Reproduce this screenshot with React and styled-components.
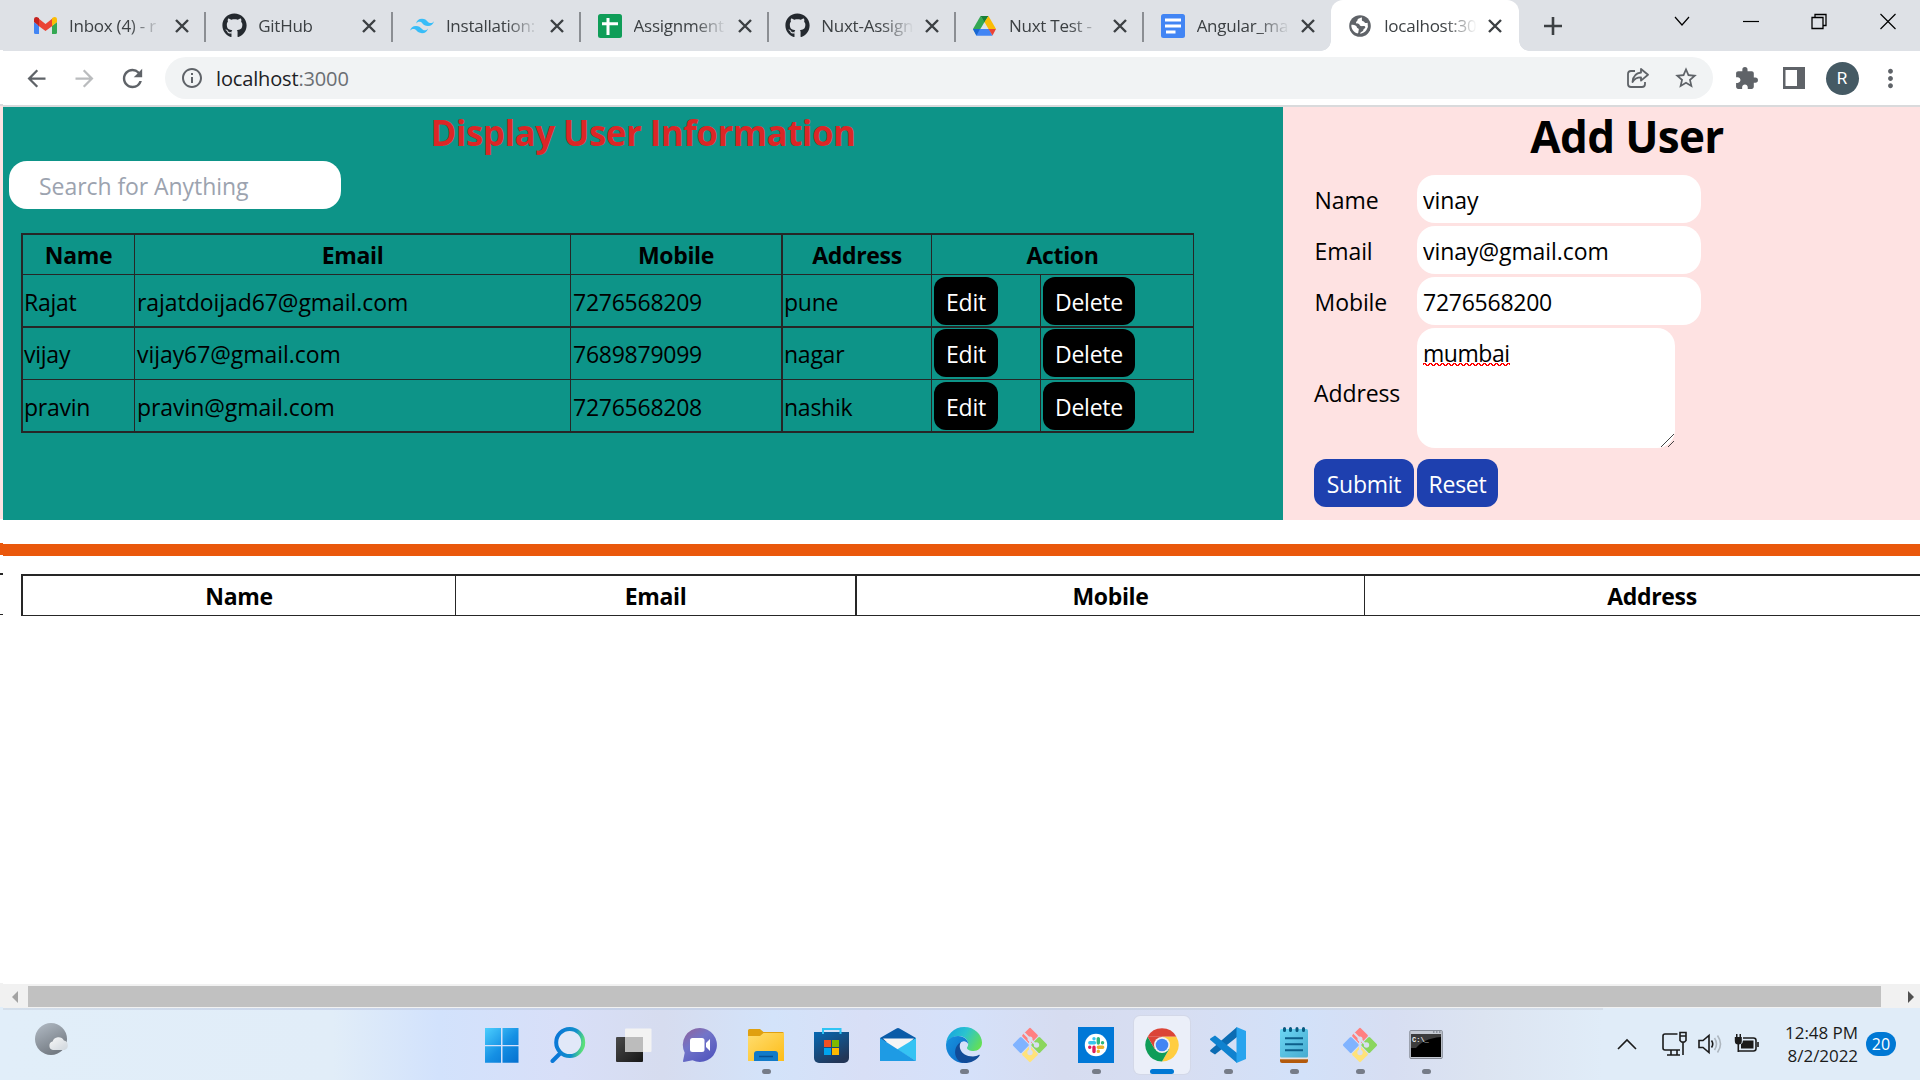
import React from "react";
import styled, { createGlobalStyle, css } from "styled-components";
import { FaGithub } from "react-icons/fa";
import { SiTailwindcss } from "react-icons/si";
import { MdArrowBack, MdArrowForward, MdRefresh, MdInfoOutline, MdStarBorder, MdExtension, MdMoreVert } from "react-icons/md";

const line = "#262626";

const GlobalStyle = createGlobalStyle`
  * { box-sizing: border-box; }
  body {
    margin: 0;
    overflow: hidden;
    background: #fff;
    font-family: "Open Sans", "Noto Sans", sans-serif;
    color: #000;
  }
  svg { display: block; flex: none; }
`;

const Screen = styled.div`
  display: flex;
  width: 1920px;
  height: 1080px;
  overflow: hidden;
`;

const Edge = styled.div`
  width: 3px;
  flex: none;
  display: flex;
  flex-direction: column;
`;

const EdgeBand = styled.div`
  height: ${(p) => p.$h}px;
  background: ${(p) => p.$bg};
`;

const Main = styled.div`
  flex: 1;
  min-width: 0;
  display: flex;
  flex-direction: column;
`;

/* ---------- browser chrome ---------- */

const TabBar = styled.div`
  height: 51px;
  flex: none;
  display: flex;
  align-items: stretch;
  background: #dee1e6;
  padding-left: 14px;
`;

const Tab = styled.div`
  width: 187.7px;
  flex: none;
  display: flex;
  align-items: center;
  padding-left: ${(p) => (p.$first ? 16 : 17.5)}px;
  position: relative;
  ${(p) =>
    p.$divider &&
    css`
      &::after {
        content: "";
        position: absolute;
        right: -1px;
        top: 12px;
        width: 2px;
        height: 30px;
        background: #8b8e93;
      }
    `}
  ${(p) =>
    p.$active &&
    css`
      background: #fff;
      border-radius: 12px 12px 0 0;
      &::before,
      &::after {
        content: "";
        position: absolute;
        bottom: 0;
        width: 10px;
        height: 10px;
      }
      &::before {
        left: -10px;
        background: radial-gradient(circle at 0 0, transparent 9.5px, #fff 10px);
      }
      &::after {
        right: -10px;
        background: radial-gradient(circle at 100% 0, transparent 9.5px, #fff 10px);
      }
    `}
`;

const TabIcon = styled.span`
  width: 24px;
  display: flex;
  justify-content: center;
`;

const TabTitle = styled.span`
  width: 94px;
  margin-left: 12px;
  overflow: hidden;
  white-space: nowrap;
  font-size: 17px;
  letter-spacing: -0.25px;
  line-height: 24px;
  color: #3c4043;
  mask-image: linear-gradient(90deg, #000 60px, transparent 93px);
`;

const TabClose = styled.span`
  margin-left: ${(p) => (p.$first ? 12 : 10)}px;
  display: flex;
`;

const NewTab = styled.div`
  display: flex;
  align-items: center;
  margin-left: 25px;
  flex: 1;
`;

const WindowControls = styled.div`
  display: flex;
  align-items: flex-start;
  gap: 52.7px;
  padding: 11px 24px 0 0;
`;

const Toolbar = styled.div`
  height: 56px;
  flex: none;
  display: flex;
  align-items: center;
  border-bottom: 2px solid #d9dadc;
  background: #fff;
  padding: 0 6px 0 9px;
`;

const ToolBtn = styled.span`
  width: 48px;
  display: flex;
  justify-content: center;
  color: ${(p) => p.$color || "#5f6368"};
`;

const Omnibox = styled.div`
  flex: 1;
  height: 42px;
  margin-left: 9px;
  margin-right: 9px;
  border-radius: 21px;
  background: #f1f3f4;
  display: flex;
  align-items: center;
  padding-left: 3px;
  padding-right: 3px;
`;

const Url = styled.span`
  flex: 1;
  font-size: 20px;
  letter-spacing: -0.15px;
  color: #202124;
  span { color: #6a6e73; }
`;

const Avatar = styled.span`
  width: 33px;
  height: 33px;
  border-radius: 50%;
  background: #455a64;
  color: #fff;
  font: 17px Roboto, sans-serif;
  display: flex;
  align-items: center;
  justify-content: center;
`;

/* ---------- page ---------- */

const Page = styled.div`
  flex: 1;
  min-height: 0;
  display: flex;
  flex-direction: column;
  overflow: hidden;
`;

const Panels = styled.div`
  display: flex;
  height: 413px;
  flex: none;
`;

const UsersPanel = styled.section`
  width: 1280px;
  flex: none;
  background: #0d9488;
`;

const UsersTitle = styled.h2`
  margin: 0;
  height: 54px;
  line-height: 52px;
  text-align: center;
  font-size: 35px;
  font-weight: 700;
  letter-spacing: -0.55px;
  color: #dc2626;
`;

const fieldText = css`
  font-family: "Open Sans", "Noto Sans", sans-serif;
  font-size: 23px;
  letter-spacing: ${(p) => (p.$loose ? -0.06 : -0.25)}px;
`;

const Search = styled.input`
  ${fieldText}
  display: block;
  margin-left: 6px;
  width: 332px;
  height: 48px;
  border: 0;
  border-radius: 18px;
  padding: 2px 30px 0;
  background: #fff;
  &::placeholder { color: #9ca3af; opacity: 1; }
`;

const Grid = styled.div`
  display: grid;
  flex: none;
  grid-template-columns: ${(p) => p.$cols};
  grid-template-rows: ${(p) => p.$rows};
  border: solid ${line};
  border-width: 2px 0 0 2px;
  margin: ${(p) => p.$margin};
  width: max-content;
`;

const Cell = styled.div`
  ${fieldText}
  display: flex;
  align-items: center;
  white-space: nowrap;
  padding: ${(p) => (p.$bottom === 1 ? 0 : 2)}px 0 0 ${(p) => (p.$snug ? 1 : 2)}px;
  border: 0 solid ${line};
  border-right-width: ${(p) => p.$right || 1}px;
  border-bottom-width: ${(p) => p.$bottom || 1}px;
  ${(p) =>
    p.$head &&
    css`
      justify-content: center;
      font-weight: 700;
      letter-spacing: -0.35px;
      padding: 0;
      grid-column: span ${p.$span || 1};
    `}
  ${(p) => p.$action && css`padding: ${p.$action}px 0 0 2px; align-items: flex-start;`}
`;

const Button = styled.button`
  ${fieldText}
  height: 48px;
  width: ${(p) => p.$w}px;
  padding: 2px 0 0;
  border: 0;
  border-radius: 12px;
  color: #fff;
  background: ${(p) => (p.$blue ? "#1e40af" : "#000")};
`;

const FormPanel = styled.section`
  width: 688px;
  flex: none;
  background: #fee2e2;
`;

const FormTitle = styled.h1`
  margin: 0;
  height: 68px;
  line-height: 59px;
  text-align: center;
  font-size: 44px;
  font-weight: 700;
  letter-spacing: -0.65px;
`;

const FormRows = styled.div`
  padding-left: 31px;
  display: flex;
  flex-direction: column;
  gap: 3px;
`;

const FormRow = styled.label`
  ${fieldText}
  display: grid;
  grid-template-columns: 103px auto;
  align-items: center;
  justify-content: start;
`;

const Label = styled.span`
  padding: ${(p) => (p.$tall ? 9 : 2)}px 0 0 ${(p) => (p.$tall ? 0 : 0.6)}px;
  letter-spacing: -0.1px;
`;

const Input = styled.input`
  ${fieldText}
  width: 284px;
  height: 48px;
  border: 0;
  border-radius: 18px;
  padding: 2px 6px 0;
  background: #fff;
`;

const Area = styled.div`
  ${fieldText}
  width: 258px;
  height: 120px;
  border-radius: 18px;
  padding: 7px 6px 0;
  line-height: 36px;
  background: #fff;
  position: relative;
  svg { position: absolute; right: 1px; bottom: 1px; }
`;

const Misspelled = styled.span`
  display: inline-block;
  height: 31px;
  letter-spacing: -0.45px;
  background:
    linear-gradient(45deg, transparent 40%, #f00 40% 62%, transparent 62%) 0 100% / 6px 3px repeat-x,
    linear-gradient(-45deg, transparent 40%, #f00 40% 62%, transparent 62%) 3px 100% / 6px 3px repeat-x;
`;

const Buttons = styled.div`
  display: flex;
  gap: 3px;
  margin-top: 8px;
`;

const Rule = styled.div`
  height: 12px;
  flex: none;
  margin: 24px 0 18px;
  background: #ea580c;
`;

/* ---------- scrollbar and taskbar ---------- */

const Scrollbar = styled.div`
  height: 24px;
  flex: none;
  display: flex;
  align-items: center;
  background: #f1f1f1;
  padding: 2px 0 1px;
`;

const Thumb = styled.div`
  flex: 1;
  height: 21px;
  background: #c1c1c1;
`;

const ScrollArrow = styled.span`
  width: ${(p) => p.$w}px;
  display: flex;
  padding-left: ${(p) => p.$pl}px;
`;

const Taskbar = styled.div`
  height: 72px;
  flex: none;
  display: flex;
  background:
    linear-gradient(90deg, #d4dfeb, #c6d2ea 30%, #c9d2e4 70%, #d4deea) 0 0 / 1600px 2px no-repeat,
    linear-gradient(90deg, #e1eef9 0, #e1edf8 330px, #d2e2fc 435px, #d8dff8 560px, #d6dcef 660px, #d3e3fa 770px, #d8dff6 860px, #d5e1fa 960px, #d6dcf0 1060px, #d7def2 1180px, #d2e1f9 1300px, #d7def2 1390px, #dce4f1 1480px, #e0ecf8 1600px, #e0ecf8 100%);
`;

const Weather = styled.div`
  width: 466px;
  padding: 14px 0 0 31px;
`;

const Apps = styled.div`
  display: flex;
  flex: 1;
`;

const AppSlot = styled.div`
  width: 66px;
  display: flex;
  flex-direction: column;
  align-items: center;
  padding-top: 8px;
`;

const AppTile = styled.div`
  width: 56px;
  height: 58px;
  border-radius: 6px;
  display: flex;
  flex-direction: column;
  align-items: center;
  justify-content: space-between;
  padding-top: 11px;
  ${(p) => p.$active && css`background: #ebeff9; box-shadow: 0 0 0 1px #d3d8e8;`}
`;

const Dot = styled.span`
  width: ${(p) => (p.$kind === "active" ? 24 : 9)}px;
  height: 5px;
  border-radius: 3px;
  background: ${(p) => (p.$kind === "active" ? "#0078d4" : p.$kind ? "#767c88" : "transparent")};
`;

const Tray = styled.div`
  display: flex;
  align-items: center;
  padding-right: 24px;
`;

const TrayIcon = styled.span`
  margin-right: ${(p) => p.$mr}px;
`;

const Clock = styled.div`
  width: 80px;
  text-align: right;
  font-size: 17px;
  letter-spacing: -0.05px;
  line-height: 23px;
  padding-bottom: 1px;
  color: #1b1b1b;
  white-space: nowrap;
`;

const Badge = styled.span`
  margin-left: 8px;
  width: 30px;
  height: 24px;
  border-radius: 12px;
  background: #0078d4;
  color: #fff;
  font-size: 16px;
  display: flex;
  align-items: center;
  justify-content: center;
`;

/* ---------- drawings ---------- */

const Cross = () => (
  <svg width="14" height="14" viewBox="0 0 14 14" stroke="#3c4043" strokeWidth="2.4"><path d="M1 1l12 12M13 1L1 13" /></svg>
);

const Gmail = () => (
  <svg width="23" height="18" viewBox="0 0 23 18">
    <path fill="#4285f4" d="M0 5l5 4v8H1.5A1.5 1.5 0 0 1 0 15.500z" />
    <path fill="#34a853" d="M18 9l5-4v10.500a1.500 1.500 0 0 1-1.500 1.500H18z" />
    <path fill="#ea4335" d="M4 1l7.500 6L19 1v7.500L11.500 14 4 8.500z" />
    <path fill="#c5221f" d="M0 2.500C0 0 2.600-.6 4.400.8L5 1.300V9L0 5z" />
    <path fill="#fbbc04" d="M23 2.500C23 0 20.400-.6 18.600.8l-.6.500V9l5-4z" />
  </svg>
);

const Sheets = () => (
  <svg width="24" height="24" viewBox="0 0 24 24"><rect width="24" height="24" rx="2.500" fill="#0f9d58" /><path d="M4 9.700h16M10 4v17" stroke="#fff" strokeWidth="3" /></svg>
);

const Drive = () => (
  <svg width="23" height="20" viewBox="0 0 23 20">
    <path fill="#34a853" d="M7.500 0L0 13l3.500 6.500L11.500 6z" />
    <path fill="#188038" d="M7.500 0h8l-4 6.500z" />
    <path fill="#fbbc04" d="M15.500 0L23 13h-7.500L11.500 6z" />
    <path fill="#4285f4" d="M0 13h16l3.500 6.800h-16z" />
    <path fill="#1967d2" d="M0 13h7l-3.500 6.500z" />
    <path fill="#ea4335" d="M15.500 13H23l-3.500 6.600z" />
  </svg>
);

const Docs = () => (
  <svg width="24" height="24" viewBox="0 0 24 24"><rect width="24" height="24" rx="2.500" fill="#4285f4" /><path d="M4 6h16M4 12h16M5 18h9.500" stroke="#fff" strokeWidth="2.800" /></svg>
);

const Globe = () => (
  <svg width="22" height="22" viewBox="0 0 22 22">
    <circle cx="11" cy="11" r="10.800" fill="#5f6368" />
    <path fill="#fff" d="M12.500 2.300c-1.500 1-4 1.200-4 2.800 0 1.500-1.300 1.200-1.500 2.400-.2 1.200 1.500.8 2.500 1.200 1.500.5.8 1.800 2.300 2.300 1.700.5 3.200-.7 4.200.5.900 1.200-.3 1.800-1 2.300-.8.600-.4 1.800-1.500 2.500-1 .7-2.200.9-2.400 2.500a8.600 8.600 0 0 0 7.500-11c-1.200.3-2.700.5-3-.6-.3-1.200-2.500-.6-2.700-2-.1-1.200.4-1.700-.4-2.900zM2.400 9.700c1.600.2 4 .1 5 1.600.7 1.200.4 1.700 1.800 2.300 1.300.6.200 2 .2 3.400 0 1-.5 1.700-1.500 1.300C4.500 16.800 2 13.500 2.400 9.700z" />
  </svg>
);

const Share = () => (
  <svg width="22" height="21" viewBox="0 0 22 21" fill="none" stroke="#5f6368" strokeWidth="1.800" strokeLinejoin="round">
    <path d="M8 3H4a3 3 0 0 0-3 3v10a3 3 0 0 0 3 3h11a3 3 0 0 0 3-3v-2" />
    <path d="M14 1l7 5.800-7 5.800V9.300c-3.500 0-6.500 1-8.500 4.700.5-5 3.500-9 8.500-9.500z" />
  </svg>
);

const SidePanel = () => (
  <svg width="22" height="22" viewBox="0 0 22 22"><path fill="#5f6368" fillRule="evenodd" d="M0 0h22v22H0zM2.500 3v16h11.500V3z" /></svg>
);

const ScrollLeft = () => <svg width="6" height="12"><path d="M6 0v12L0 6z" fill="#a3a3a3" /></svg>;
const ScrollRight = () => <svg width="6" height="12"><path d="M0 0v12L6 6z" fill="#505050" /></svg>;

const Moon = () => (
  <svg width="36" height="34" viewBox="0 0 36 34">
    <defs>
      <linearGradient id="moon" x1="0" y1="0" x2=".5" y2="1"><stop stopColor="#b3bcc6" /><stop offset="1" stopColor="#747b83" /></linearGradient>
      <linearGradient id="cloud" x1="0" y1="0" x2="1" y2="1"><stop stopColor="#f8f8f8" /><stop offset="1" stopColor="#ced5dc" /></linearGradient>
    </defs>
    <circle cx="17" cy="17" r="16" fill="url(#moon)" />
    <path fill="url(#cloud)" d="M19 28a4.300 4.300 0 0 1-.4-8.400 6.200 6.200 0 0 1 11.300-1.200A5 5 0 0 1 30.500 28z" />
  </svg>
);

const Start = () => (
  <svg width="36" height="36" viewBox="0 0 36 36">
    <defs><linearGradient id="win" gradientUnits="userSpaceOnUse" x1="0" y1="0" x2="34" y2="36"><stop stopColor="#4fd2ff" /><stop offset=".55" stopColor="#1590e4" /><stop offset="1" stopColor="#0470cf" /></linearGradient></defs>
    <path fill="url(#win)" d="M1 1h16v17H1zM18.500 1h16v17h-16zM1 19.300h16v16.500H1zM18.500 19.300h16v16.500h-16z" />
  </svg>
);

const SearchIcon = () => (
  <svg width="36" height="36" viewBox="0 0 36 36" fill="none">
    <defs><linearGradient id="lens" x1="0" y1=".4" x2="1" y2=".6"><stop stopColor="#0a78d7" /><stop offset=".65" stopColor="#1290ca" /><stop offset="1" stopColor="#5be079" /></linearGradient></defs>
    <path d="M2.500 34l9-9" stroke="#0a78d7" strokeWidth="4" strokeLinecap="round" />
    <circle cx="19.700" cy="15.500" r="13.500" stroke="url(#lens)" strokeWidth="4" fill="#e1e8f8" />
  </svg>
);

const TaskView = () => (
  <svg width="36" height="36" viewBox="0 0 36 36">
    <defs><linearGradient id="tvd" x1="0" y1="0" x2="1" y2="1"><stop stopColor="#4a4a4a" /><stop offset="1" stopColor="#171717" /></linearGradient></defs>
    <rect x="0" y="10" width="27" height="25" rx="1" fill="url(#tvd)" />
    <rect x="9" y="1.500" width="26.500" height="23.500" rx="1" fill="#f3f3f3" />
    <path d="M9 10h18v15H9z" fill="#bcbcbc" />
  </svg>
);

const Chat = () => (
  <svg width="36" height="36" viewBox="0 0 36 36">
    <defs><linearGradient id="chat" x1=".1" y1="0" x2=".8" y2="1"><stop stopColor="#8f639d" /><stop offset=".4" stopColor="#7275c9" /><stop offset="1" stopColor="#5054bd" /></linearGradient></defs>
    <path fill="url(#chat)" d="M18 1a17 17 0 1 1-7.500 32.300L1.800 35c-.6.100-.9-.4-.8-.9l1.700-8.300A17 17 0 0 1 18 1z" />
    <rect x="8" y="11" width="14.500" height="14" rx="2.500" fill="#fff" />
    <path d="M24 16l4-4v12l-4-4z" fill="#fff" />
  </svg>
);

const Folder = () => (
  <svg width="36" height="36" viewBox="0 0 36 36">
    <defs><linearGradient id="fold" x1="0" y1="0" x2="1" y2="1"><stop stopColor="#ffdd70" /><stop offset="1" stopColor="#fdbd18" /></linearGradient></defs>
    <path d="M0 3.500A1.500 1.500 0 0 1 1.500 2H12l3.500 3H34.500A1.500 1.500 0 0 1 36 6.500V20H0z" fill="#e0a010" />
    <path d="M0 9h12l3.500-3H36v28H0z" fill="url(#fold)" />
    <path d="M6 34V27a3 3 0 0 1 3-3h18a3 3 0 0 1 3 3v7z" fill="#117ac9" />
    <path d="M11 29.500h14" stroke="#075092" strokeWidth="1.500" />
  </svg>
);

const Store = () => (
  <svg width="36" height="36" viewBox="0 0 36 36">
    <defs><linearGradient id="store" x1="0" y1="0" x2=".6" y2="1"><stop stopColor="#0668b3" /><stop offset="1" stopColor="#233657" /></linearGradient></defs>
    <path d="M0 5h35v26a5 5 0 0 1-5 5H5a5 5 0 0 1-5-5z" fill="url(#store)" />
    <path d="M9 7V2h17.500v5" fill="none" stroke="#2ec4f4" strokeWidth="2" />
    <path d="M10 13h7v7h-7z" fill="#f25022" /><path d="M18 13h7v7h-7z" fill="#7fba00" /><path d="M10 21h7v7h-7z" fill="#00a4ef" /><path d="M18 21h7v7h-7z" fill="#ffb900" />
  </svg>
);

const Mail = () => (
  <svg width="36" height="36" viewBox="0 0 36 36">
    <path d="M0 11L16.500 1.500a3 3 0 0 1 3 0L36 11v4H0z" fill="#0a5ba8" />
    <path d="M3 11.500h31L18 26z" fill="#f5f5f5" />
    <path d="M36 11v23L17 22.500z" fill="#35c3f3" />
    <path d="M0 11l36 23H0z" fill="#1e9be4" />
  </svg>
);

const EdgeLogo = () => (
  <svg width="36" height="36" viewBox="0 0 36 36">
    <defs>
      <linearGradient id="edgeTop" x1="0" y1=".3" x2="1" y2=".7"><stop stopColor="#16a5df" /><stop offset=".45" stopColor="#2bc3cf" /><stop offset="1" stopColor="#65e052" /></linearGradient>
      <linearGradient id="edgeLow" x1="0" y1="0" x2="1" y2="1"><stop stopColor="#1793e0" /><stop offset="1" stopColor="#0d68c4" /></linearGradient>
    </defs>
    <path d="M0 18A18 18 0 0 1 18 0c11 0 18 8 18 15.500 0 5.500-4 8.500-8.500 8.500-4 0-6.500-1.500-6.500-3 0-1 1.200-1.500 1.200-4 0-4-3.800-8-9.200-8C6 9 0 13.500 0 18z" fill="url(#edgeTop)" />
    <path d="M0 18C0 13 5.500 9 12 9c6 0 10.200 4 10.200 8-1.200-2-3.200-3-5.200-2.500-3 .5-5 3.500-5 7 0 7 6 14.500 6 14.500A18 18 0 0 1 0 18z" fill="url(#edgeLow)" />
    <path d="M15.500 14.800c-3.500 2.700-2.500 14.700 11.500 14.700 2 0 4.500-.8 6-1.700.6-.3 1 .1.700.6C30.500 33 25 36 18.500 36 8.500 36 5 20 15.500 14.800z" fill="#114b98" />
  </svg>
);

const Git = () => (
  <svg width="36" height="36" viewBox="0 0 36 36">
    <g transform="rotate(45 18 18)">
      <rect x="5.500" y="5.500" width="12" height="12" rx="1.500" fill="#ff8080" />
      <rect x="18.500" y="5.500" width="12" height="12" rx="1.500" fill="#8bd65e" />
      <rect x="18.500" y="18.500" width="12" height="12" rx="1.500" fill="#ffe27a" />
      <rect x="5.500" y="18.500" width="12" height="12" rx="1.500" fill="#80b3ff" />
    </g>
    <path d="M12 6l12 12M18 12v14" stroke="#d9dff1" strokeWidth="2" />
    <circle cx="18" cy="12" r="2.500" fill="#d9dff1" /><circle cx="24.500" cy="18" r="2.700" fill="#d9dff1" /><circle cx="18" cy="25.500" r="2.700" fill="#d9dff1" />
  </svg>
);

const Slack = () => (
  <svg width="36" height="36" viewBox="0 0 36 36">
    <path d="M0 0h36v36H0z" fill="#0078d7" /><circle cx="18" cy="18" r="11.200" fill="#fff" />
    <g strokeWidth="3.400" strokeLinecap="round" fill="none">
      <path d="M11.800 15.800h4.600M16 11.600v.1" stroke="#36c5f0" />
      <path d="M20.300 11.600v4.400M24.500 15.800h.1" stroke="#2eb67d" />
      <path d="M20.300 20.200h4.400M20.300 24.300v.1" stroke="#ecb22e" />
      <path d="M16 20.200v4.400M11.700 20.200h.1" stroke="#e01e5a" />
    </g>
  </svg>
);

const Chrome = () => (
  <svg width="36" height="36" viewBox="0 0 36 36">
    <path d="M3.600 9.700A16.600 16.600 0 0 1 32.400 9.700H18z" fill="#db4437" />
    <path d="M32.400 9.700A16.600 16.600 0 0 1 18 34.600L25.200 22 18 9.700z" fill="#ffcd40" />
    <path d="M18 34.600A16.600 16.600 0 0 1 3.600 9.700L10.800 22 25.200 22z" fill="#0f9d58" />
    <path d="M3.600 9.700L10.800 22 18 9.700z" fill="#db4437" />
    <circle cx="18" cy="18" r="8" fill="#f1f1f1" /><circle cx="18" cy="18" r="6.300" fill="#4285f4" />
  </svg>
);

const VSCode = () => (
  <svg width="36" height="36" viewBox="0 0 36 36">
    <path d="M27 0v10L5 27.500l-4.300-2.700a1.300 1.300 0 0 1 0-2z" fill="#0b6cb3" />
    <path d="M.7 11.200L5 8.500 27 26v10L.7 13.300a1.300 1.300 0 0 1 0-2.100z" fill="#0f82cf" />
    <path d="M26.500 0L36 4v28l-9.500 4z" fill="#28a4ee" />
  </svg>
);

const Notepad = () => (
  <svg width="36" height="36" viewBox="0 0 36 36">
    <defs><linearGradient id="note" x1="0" y1="0" x2="1" y2="1"><stop stopColor="#6bd6f3" /><stop offset="1" stopColor="#47abd0" /></linearGradient></defs>
    <path d="M4 28h28v6a2 2 0 0 1-2 2H6a2 2 0 0 1-2-2z" fill="#b35a0c" /><path d="M4 29h28v3.300H4z" fill="#e9e3df" />
    <rect x="4" y="2" width="28" height="28.500" rx="1.500" fill="url(#note)" />
    <path d="M9 11.300h18M9 17.300h18M9 23.300h18" stroke="#0c5f8a" strokeWidth="2" />
    <path d="M8.500 1.500v2M14.500 1.500v2M21 1.500v2M27.500 1.500v2" stroke="#08587f" strokeWidth="3" strokeLinecap="round" />
  </svg>
);

const TermText = styled.text`
  font: bold 7px "Liberation Mono", monospace;
  fill: #eee;
`;

const Terminal = () => (
  <svg width="36" height="36" viewBox="0 0 36 36">
    <rect x="1.800" y="3.500" width="32.500" height="28" rx="1" fill="#c5cad3" stroke="#858b96" />
    <path d="M3 7h30v23H3z" fill="#000" /><path d="M3 7h30v3C20 11 12 16 8 21H3z" fill="#3c3c3c" />
    <TermText x="4" y="14.500">C:\_</TermText>
    <path d="M25 5h1.500M28 5h1.500M31 5h1.500" stroke="#5b616d" />
  </svg>
);

const Monitor = () => (
  <svg width="25" height="26" viewBox="0 0 25 26" fill="none" stroke="#1b1b1b" strokeWidth="1.600">
    <path d="M15.500 3H3a2 2 0 0 0-2 2v12a2 2 0 0 0 2 2h15M9 19v4.500M15 19v4.500M5 24h13" />
    <path d="M18 1.500h6v8l-1.500 1.500h-3L18 9.500zM18 5h6M21 11v13" />
  </svg>
);

const Speaker = () => (
  <svg width="24" height="22" viewBox="0 0 24 22" fill="none" stroke="#1b1b1b" strokeWidth="1.600">
    <path d="M1 7.500h4l6-5v17l-6-5H1zM13.500 7.500q2.500 3.500 0 7" />
    <path d="M16.500 5q4 6 0 12M19.500 2.500q6 8.500 0 17" stroke="#adb6bf" />
  </svg>
);

const Battery = () => (
  <svg width="26" height="22" viewBox="0 0 26 22">
    <path d="M9 5h10.500A2.500 2.500 0 0 1 22 7.500v8a2.500 2.500 0 0 1-2.500 2.500H5M4.300 10v9M24 9v5" fill="none" stroke="#1b1b1b" strokeWidth="1.600" />
    <path d="M9 7.500h10.500v8H7v-4.500a4 4 0 0 0 2-3.500zM.8 4h7v4a3.500 3.500 0 0 1-7 0zM2 1h1.500v3H2zM5.500 1H7v3H5.500z" fill="#1b1b1b" />
  </svg>
);

/* ---------- data ---------- */

const TABS = [
  { title: "Inbox (4) - r", icon: <Gmail /> },
  { title: "GitHub", icon: <FaGithub size={25} color="#24292f" /> },
  { title: "Installation:", icon: <SiTailwindcss size={24} color="#38bdf8" /> },
  { title: "Assignment", icon: <Sheets /> },
  { title: "Nuxt-Assign", icon: <FaGithub size={25} color="#24292f" /> },
  { title: "Nuxt Test - ", icon: <Drive /> },
  { title: "Angular_ma", icon: <Docs /> },
  { title: "localhost:30", icon: <Globe />, active: true },
];

const USERS = [
  { name: "Rajat", email: "rajatdoijad67@gmail.com", mobile: "7276568209", address: "pune" },
  { name: "vijay", email: "vijay67@gmail.com", mobile: "7689879099", address: "nagar" },
  { name: "pravin", email: "pravin@gmail.com", mobile: "7276568208", address: "nashik" },
];

const APPS = [
  { icon: <Start /> },
  { icon: <SearchIcon /> },
  { icon: <TaskView /> },
  { icon: <Chat /> },
  { icon: <Folder />, dot: "open" },
  { icon: <Store /> },
  { icon: <Mail /> },
  { icon: <EdgeLogo />, dot: "open" },
  { icon: <Git /> },
  { icon: <Slack />, dot: "open" },
  { icon: <Chrome />, dot: "active" },
  { icon: <VSCode />, dot: "open" },
  { icon: <Notepad />, dot: "open" },
  { icon: <Git />, dot: "open" },
  { icon: <Terminal />, dot: "open" },
];

const EDGE = [
  [50, "#dee1e6"], [54, "#fff"], [2, "#d9dadc"], [413, "#fee2e2"], [24, "#fff"], [12, "#ea580c"],
  [18, "#fff"], [2, line], [39, "#fff"], [1, line], [368, "#fff"], [24, "#f1f1f1"], [73, "#e1eef9"],
];

export default function App() {
  return (
    <Screen>
      <GlobalStyle />
      <Edge>{EDGE.map(([h, bg], i) => <EdgeBand key={i} $h={h} $bg={bg} />)}</Edge>
      <Main>
        <TabBar>
          {TABS.map((t, i) => (
            <Tab key={i} $first={i === 0} $active={t.active} $divider={i < 6}>
              <TabIcon>{t.icon}</TabIcon>
              <TabTitle>{t.title}</TabTitle>
              <TabClose $first={i === 0}><Cross /></TabClose>
            </Tab>
          ))}
          <NewTab>
            <svg width="18" height="18" stroke="#3c4043" strokeWidth="2.6"><path d="M9 0v18M0 9h18" /></svg>
          </NewTab>
          <WindowControls>
            <svg width="16" height="20" fill="none" stroke="#000" strokeWidth="1.2"><path d="M1 6l7 8 7-8" /></svg>
            <svg width="16" height="20" stroke="#000" strokeWidth="1.2"><path d="M0 10.500h16" /></svg>
            <svg width="16" height="20" fill="none" stroke="#000" strokeWidth="1.3"><path d="M1 6.500h11v11H1zM4 6.500v-3h11v11h-3" /></svg>
            <svg width="16" height="20" stroke="#000" strokeWidth="1.2"><path d="M.5 3l15 15M15.500 3L.5 18" /></svg>
          </WindowControls>
        </TabBar>
        <Toolbar>
          <ToolBtn><MdArrowBack size={27} /></ToolBtn>
          <ToolBtn $color="#babcbe"><MdArrowForward size={27} /></ToolBtn>
          <ToolBtn><MdRefresh size={29} /></ToolBtn>
          <Omnibox>
            <ToolBtn><MdInfoOutline size={24} /></ToolBtn>
            <Url>localhost<span>:3000</span></Url>
            <ToolBtn><Share /></ToolBtn>
            <ToolBtn><MdStarBorder size={26} /></ToolBtn>
          </Omnibox>
          <ToolBtn><MdExtension size={25} /></ToolBtn>
          <ToolBtn><SidePanel /></ToolBtn>
          <ToolBtn><Avatar>R</Avatar></ToolBtn>
          <ToolBtn><MdMoreVert size={29} /></ToolBtn>
        </Toolbar>
        <Page>
          <Panels>
            <UsersPanel>
              <UsersTitle>Display User Information</UsersTitle>
              <Search $loose placeholder="Search for Anything" />
              <Grid $cols="112px 436px 212px 149px 109px 153px" $rows="40px 53px 52px 53px" $margin="24px 0 0 18px">
                <Cell $head>Name</Cell>
                <Cell $head>Email</Cell>
                <Cell $head $right={2}>Mobile</Cell>
                <Cell $head>Address</Cell>
                <Cell $head $span={2}>Action</Cell>
                {USERS.map((u, i) => {
                  const bottom = i === 1 ? 1 : 2;
                  return (
                    <React.Fragment key={u.name}>
                      <Cell $snug $bottom={bottom}>{u.name}</Cell>
                      <Cell $loose $bottom={bottom}>{u.email}</Cell>
                      <Cell $bottom={bottom} $right={2}>{u.mobile}</Cell>
                      <Cell $snug $bottom={bottom}>{u.address}</Cell>
                      <Cell $bottom={bottom} $action={bottom}><Button $w={64}>Edit</Button></Cell>
                      <Cell $bottom={bottom} $action={bottom}><Button $w={92}>Delete</Button></Cell>
                    </React.Fragment>
                  );
                })}
              </Grid>
            </UsersPanel>
            <FormPanel>
              <FormTitle>Add User</FormTitle>
              <FormRows>
                <FormRow><Label>Name</Label><Input $loose defaultValue="vinay" /></FormRow>
                <FormRow><Label>Email</Label><Input $loose defaultValue="vinay@gmail.com" /></FormRow>
                <FormRow><Label>Mobile</Label><Input defaultValue="7276568200" /></FormRow>
                <FormRow>
                  <Label $tall>Address</Label>
                  <Area>
                    <Misspelled>mumbai</Misspelled>
                    <svg width="13" height="13" stroke="#444" strokeWidth="1"><path d="M0 13L13 0M7 13l6-6" /></svg>
                  </Area>
                </FormRow>
                <Buttons>
                  <Button $blue $w={100}>Submit</Button>
                  <Button $blue $w={81}>Reset</Button>
                </Buttons>
              </FormRows>
            </FormPanel>
          </Panels>
          <Rule />
          <Grid $cols="433px 401px 508px 575px" $rows="40px" $margin="0 0 0 18px">
            <Cell $head>Name</Cell>
            <Cell $head $right={2}>Email</Cell>
            <Cell $head>Mobile</Cell>
            <Cell $head>Address</Cell>
          </Grid>
        </Page>
        <Scrollbar>
          <ScrollArrow $w={25} $pl={9}><ScrollLeft /></ScrollArrow>
          <Thumb />
          <ScrollArrow $w={39} $pl={27}><ScrollRight /></ScrollArrow>
        </Scrollbar>
        <Taskbar>
          <Weather><Moon /></Weather>
          <Apps>
            {APPS.map((a, i) => (
              <AppSlot key={i}>
                <AppTile $active={a.dot === "active"}>{a.icon}<Dot $kind={a.dot} /></AppTile>
              </AppSlot>
            ))}
          </Apps>
          <Tray>
            <TrayIcon $mr={25}><svg width="20" height="12" fill="none" stroke="#1b1b1b" strokeWidth="1.600"><path d="M1 11l9-9 9 9" /></svg></TrayIcon>
            <TrayIcon $mr={11}><Monitor /></TrayIcon>
            <TrayIcon $mr={12}><Speaker /></TrayIcon>
            <TrayIcon $mr={18}><Battery /></TrayIcon>
            <Clock>12:48 PM<br />8/2/2022</Clock>
            <Badge>20</Badge>
          </Tray>
        </Taskbar>
      </Main>
    </Screen>
  );
}
